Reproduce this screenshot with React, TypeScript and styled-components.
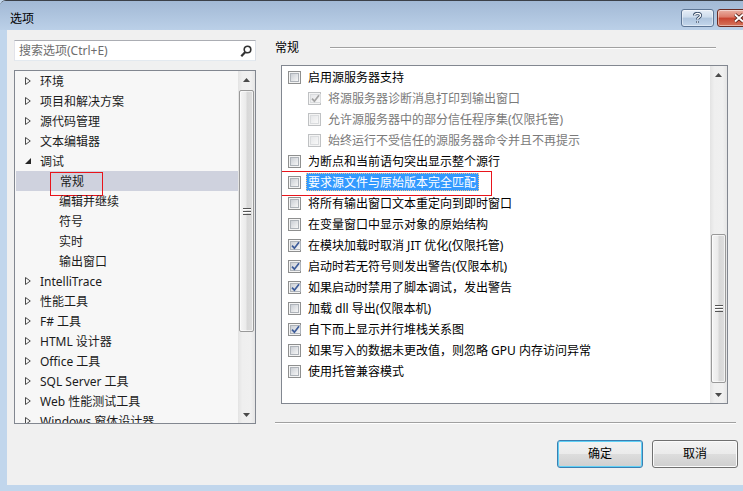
import styled, { createGlobalStyle } from 'styled-components';

const GlobalStyle = createGlobalStyle`
  html, body { margin: 0; padding: 0; background: #c1d6ec; }
  body {
    font-family: "Noto Sans", "Noto Sans CJK SC", sans-serif;
    font-size: 12px;
    color: #000;
  }
  * { box-sizing: border-box; }
`;

const Window = styled.div`
  width: 743px;
  height: 491px;
  overflow: hidden;
  display: flex;
  flex-direction: column;
  background: #c1d6ec;
  border-top: 1px solid #3b4048;
  border-top-left-radius: 6px;
`;

const TitleBar = styled.div`
  height: 29px;
  flex: none;
  display: flex;
  align-items: flex-start;
  padding-left: 10px;
  background: linear-gradient(#a2b9d5, #bbd0e8);
`;

const Title = styled.div`
  flex: 1;
  margin-top: 10px;
  font-size: 12px;
  line-height: 16px;
`;

const CaptionButtons = styled.div`
  display: flex;
  gap: 3px;
  margin-top: 8px;
  margin-right: -17px;
`;

const CaptionButton = styled.div<{ $close?: boolean }>`
  height: 18px;
  width: ${p => (p.$close ? 43 : 33)}px;
  border: 1px solid ${p => (p.$close ? '#6b2b22' : '#5d7594')};
  border-radius: 3px;
  display: flex;
  align-items: center;
  justify-content: center;
  box-shadow: inset 0 0 0 1px rgba(255, 255, 255, 0.45);
  background: ${p =>
    p.$close
      ? 'linear-gradient(#eab0a3 0%, #dc7a68 45%, #c8432f 50%, #d5755c 100%)'
      : 'linear-gradient(#e6eef7 0%, #cddcec 45%, #aec4dd 50%, #c4d7ec 100%)'};
`;

const Client = styled.div`
  flex: 1;
  margin-left: 7px;
  background: #f0f0f0;
  display: flex;
  padding-left: 7px;
`;

const BottomFrame = styled.div`
  height: 6px;
  flex: none;
`;

/* left side */

const LeftCol = styled.div`
  width: 242px;
  flex: none;
  padding-top: 10px;
  display: flex;
  flex-direction: column;
  gap: 9px;
`;

const Search = styled.div`
  height: 21px;
  background: #fff;
  border: 1px solid;
  border-color: #abadb3 #dbdfe6 #e3e9ef #e2e3ea;
  display: flex;
  align-items: center;
  justify-content: space-between;
  padding: 1px 3px 0 4px;
  color: #6d6d6d;
  line-height: 14px;
`;

const Tree = styled.div`
  height: 354px;
  border: 1px solid #828790;
  background: #f7f7f7;
  display: flex;
  overflow: hidden;
`;

const TreeList = styled.div`
  flex: 1;
  overflow: hidden;
`;

const TreeRow = styled.div<{ $child?: boolean; $selected?: boolean }>`
  height: 20px;
  display: flex;
  align-items: center;
  position: relative;
  white-space: nowrap;
  padding-top: 2px;
  padding-left: ${p => (p.$child ? 44 : 10)}px;
  margin-left: ${p => (p.$selected ? 1 : 0)}px;
  background: ${p => (p.$selected ? '#cfd2de' : 'transparent')};
  color: #1b1b1b;
  line-height: 14px;
`;

const Expander = styled.span`
  width: 15px;
  flex: none;
  display: flex;
  align-items: center;
  margin-top: -2px;
`;

/* right side */

const RightCol = styled.div`
  width: 463px;
  flex: none;
  margin-left: 19px;
  padding-top: 9px;
  display: flex;
  flex-direction: column;
`;

const SectionHeader = styled.div`
  height: 18px;
  display: flex;
  align-items: center;
  margin-bottom: 8px;
  line-height: 14px;
`;

const EtchedLine = styled.div`
  height: 2px;
  border-top: 1px solid #a0a0a0;
  border-bottom: 1px solid #fff;
`;

const HeaderLine = styled(EtchedLine)`
  flex: 1;
  margin: 0 22px 0 31px;
`;

const OptionList = styled.div`
  margin-left: 6px;
  width: 447px;
  height: 339px;
  border: 1px solid #828790;
  background: #fff;
  display: flex;
  overflow: hidden;
`;

const Options = styled.div`
  flex: 1;
`;

const OptionRow = styled.div<{ $sub?: boolean }>`
  height: 21px;
  display: flex;
  align-items: center;
  position: relative;
  white-space: nowrap;
  padding-top: 1px;
  padding-left: ${p => (p.$sub ? 26 : 6)}px;
  line-height: 14px;
`;

const OptionLabel = styled.span<{ $disabled?: boolean; $selected?: boolean }>`
  flex: none;
  margin-left: 5px;
  height: 18px;
  display: flex;
  align-items: center;
  padding: 1px 3px 0 2px;
  color: ${p => (p.$selected ? '#fff' : p.$disabled ? '#7a7a7a' : '#000')};
  background: ${p => (p.$selected ? '#3399ff' : 'transparent')};
  outline: 1px dotted ${p => (p.$selected ? '#f3c890' : 'transparent')};
  outline-offset: -1px;
`;

const Box = styled.span<{ $disabled?: boolean }>`
  width: 13px;
  height: 13px;
  flex: none;
  padding: 1px;
  display: flex;
  border: 1px solid ${p => (p.$disabled ? '#bfc1c3' : '#8e8f8f')};
  background: #f4f4f4;
`;

const BoxInner = styled.span<{ $disabled?: boolean }>`
  flex: 1;
  display: flex;
  align-items: center;
  justify-content: center;
  border: 1px solid ${p => (p.$disabled ? '#dadcde' : '#aeb3b9')};
  background: ${p =>
    p.$disabled
      ? 'linear-gradient(135deg, #e6e7e9, #f8f8f8)'
      : 'linear-gradient(135deg, #cbcfd5, #f6f6f6)'};
`;

const Mark = styled.div<{ $left: number; $top: number; $w: number; $h: number }>`
  position: absolute;
  left: ${p => p.$left}px;
  top: ${p => p.$top}px;
  width: ${p => p.$w}px;
  height: ${p => p.$h}px;
  border: 1px solid #e8141b;
  pointer-events: none;
`;

/* scrollbars */

const ScrollBar = styled.div`
  width: 17px;
  flex: none;
  display: flex;
  flex-direction: column;
  align-items: center;
  background: linear-gradient(90deg, #e3e3e3, #efefef 25%, #f0f0f0 75%, #e5e5e5);
`;

const ScrollArrow = styled.div`
  height: 17px;
  width: 100%;
  flex: none;
  display: flex;
  align-items: center;
  justify-content: center;
`;

const Thumb = styled.div<{ $top: number; $height: number }>`
  width: 15px;
  flex: none;
  margin-top: ${p => p.$top}px;
  height: ${p => p.$height}px;
  border: 1px solid #999;
  border-radius: 2px;
  display: flex;
  align-items: center;
  justify-content: center;
  background: linear-gradient(90deg, #f5f5f5, #ebebeb 45%, #d8d8d8 55%, #dedede);
  box-shadow: inset 0 0 0 1px rgba(255, 255, 255, 0.6);
`;

const Spacer = styled.div`
  flex: 1;
`;

/* buttons */

const ButtonRow = styled.div`
  margin-top: 16px;
  display: flex;
  justify-content: flex-end;
  gap: 9px;
`;

const Button = styled.div<{ $default?: boolean }>`
  width: 86px;
  height: 28px;
  display: flex;
  align-items: center;
  justify-content: center;
  border-radius: 3px;
  border: 1px solid ${p => (p.$default ? '#3c7fb1' : '#707070')};
  box-shadow: inset 0 0 0 1px ${p => (p.$default ? '#5fd0f6' : '#fbfbfb')};
  background: linear-gradient(#f2f2f2 0%, #ebebeb 50%, #dddddd 51%, #cfcfcf 100%);
  line-height: 14px;
`;

const Separator = styled(EtchedLine)`
  margin-top: 18px;
  width: 461px;
`;

function Check({ disabled }: { disabled?: boolean }) {
  return (
    <svg width="9" height="9" viewBox="0 0 9 9">
      <path
        d="M1 4.6 L3.4 7.2 L8 1.2"
        fill="none"
        stroke={disabled ? '#a3a3a3' : '#3d5c9a'}
        strokeWidth="1.7"
      />
    </svg>
  );
}

function CheckBox({ checked, disabled }: { checked?: boolean; disabled?: boolean }) {
  return (
    <Box $disabled={disabled}>
      <BoxInner $disabled={disabled}>{checked && <Check disabled={disabled} />}</BoxInner>
    </Box>
  );
}

function Arrow({ down }: { down?: boolean }) {
  return (
    <svg width="7" height="4" viewBox="0 0 7 4">
      <polygon points={down ? '0,0 7,0 3.5,4' : '0,4 7,4 3.5,0'} fill="#4a4a4a" />
    </svg>
  );
}

function Grip() {
  return (
    <svg width="8" height="7" viewBox="0 0 8 7">
      <rect x="0" y="0" width="8" height="1" fill="#555" />
      <rect x="0" y="1" width="8" height="1" fill="#fff" />
      <rect x="0" y="3" width="8" height="1" fill="#555" />
      <rect x="0" y="4" width="8" height="1" fill="#fff" />
      <rect x="0" y="6" width="8" height="1" fill="#555" />
    </svg>
  );
}

function VScroll({ top, height }: { top: number; height: number }) {
  return (
    <ScrollBar>
      <ScrollArrow>
        <Arrow />
      </ScrollArrow>
      <Thumb $top={top} $height={height}>
        <Grip />
      </Thumb>
      <Spacer />
      <ScrollArrow>
        <Arrow down />
      </ScrollArrow>
    </ScrollBar>
  );
}

const treeItems: { label: string; child?: boolean; open?: boolean; selected?: boolean }[] = [
  { label: '环境' },
  { label: '项目和解决方案' },
  { label: '源代码管理' },
  { label: '文本编辑器' },
  { label: '调试', open: true },
  { label: '常规', child: true, selected: true },
  { label: '编辑并继续', child: true },
  { label: '符号', child: true },
  { label: '实时', child: true },
  { label: '输出窗口', child: true },
  { label: 'IntelliTrace' },
  { label: '性能工具' },
  { label: 'F# 工具' },
  { label: 'HTML 设计器' },
  { label: 'Office 工具' },
  { label: 'SQL Server 工具' },
  { label: 'Web 性能测试工具' },
  { label: 'Windows 窗体设计器' },
];

const options: { label: string; checked?: boolean; sub?: boolean; selected?: boolean }[] = [
  { label: '启用源服务器支持' },
  { label: '将源服务器诊断消息打印到输出窗口', sub: true, checked: true },
  { label: '允许源服务器中的部分信任程序集(仅限托管)', sub: true },
  { label: '始终运行不受信任的源服务器命令并且不再提示', sub: true },
  { label: '为断点和当前语句突出显示整个源行' },
  { label: '要求源文件与原始版本完全匹配', selected: true },
  { label: '将所有输出窗口文本重定向到即时窗口' },
  { label: '在变量窗口中显示对象的原始结构' },
  { label: '在模块加载时取消 JIT 优化(仅限托管)', checked: true },
  { label: '启动时若无符号则发出警告(仅限本机)', checked: true },
  { label: '如果启动时禁用了脚本调试，发出警告', checked: true },
  { label: '加载 dll 导出(仅限本机)' },
  { label: '自下而上显示并行堆栈关系图', checked: true },
  { label: '如果写入的数据未更改值，则忽略 GPU 内存访问异常' },
  { label: '使用托管兼容模式' },
];

export default function App() {
  return (
    <>
      <GlobalStyle />
      <Window>
        <TitleBar>
          <Title>选项</Title>
          <CaptionButtons>
            <CaptionButton>
              <svg width="9" height="12" viewBox="0 0 9 12">
                <path
                  d="M1.5 3.5 C1.5 0.8 7.5 0.8 7.5 3.5 C7.5 5.5 4.5 5.5 4.5 7.5 M4.5 9.3 L4.5 10.8"
                  fill="none"
                  stroke="#2e4360"
                  strokeWidth="3"
                />
                <path
                  d="M1.5 3.5 C1.5 0.8 7.5 0.8 7.5 3.5 C7.5 5.5 4.5 5.5 4.5 7.5 M4.5 9.3 L4.5 10.8"
                  fill="none"
                  stroke="#fff"
                  strokeWidth="1.4"
                />
              </svg>
            </CaptionButton>
            <CaptionButton $close>
              <svg width="12" height="10" viewBox="0 0 12 10">
                <path d="M2 1.5 L10 8.5 M10 1.5 L2 8.5" stroke="#4a1a14" strokeWidth="3.6" />
                <path d="M2 1.5 L10 8.5 M10 1.5 L2 8.5" stroke="#fff" strokeWidth="2" />
              </svg>
            </CaptionButton>
          </CaptionButtons>
        </TitleBar>

        <Client>
          <LeftCol>
            <Search>
              <span>搜索选项(Ctrl+E)</span>
              <svg width="12" height="13" viewBox="0 0 12 13">
                <circle cx="7.5" cy="4.5" r="3.3" fill="none" stroke="#333" strokeWidth="1.6" />
                <path d="M5.3 7 L1.3 11.3" stroke="#333" strokeWidth="2.2" />
              </svg>
            </Search>
            <Tree>
              <TreeList>
                {treeItems.map(item => (
                  <TreeRow key={item.label} $child={item.child} $selected={item.selected}>
                    {!item.child && (
                      <Expander>
                        {item.open ? (
                          <svg width="6" height="6" viewBox="0 0 6 6">
                            <polygon points="6,0 6,6 0,6" fill="#262626" />
                          </svg>
                        ) : (
                          <svg width="6" height="8" viewBox="0 0 6 8">
                            <polygon points="0.5,0.5 5.3,4 0.5,7.5" fill="none" stroke="#4a4a4a" />
                          </svg>
                        )}
                      </Expander>
                    )}
                    {item.label}
                    {item.selected && <Mark $left={34} $top={1} $w={53} $h={24} />}
                  </TreeRow>
                ))}
              </TreeList>
              <VScroll top={2} height={242} />
            </Tree>
          </LeftCol>

          <RightCol>
            <SectionHeader>
              常规
              <HeaderLine />
            </SectionHeader>
            <OptionList>
              <Options>
                {options.map(o => (
                  <OptionRow key={o.label} $sub={o.sub}>
                    <CheckBox checked={o.checked} disabled={o.sub} />
                    <OptionLabel $disabled={o.sub} $selected={o.selected}>
                      {o.label}
                    </OptionLabel>
                    {o.selected && <Mark $left={-1} $top={0} $w={211} $h={25} />}
                  </OptionRow>
                ))}
              </Options>
              <VScroll top={151} height={149} />
            </OptionList>
            <Separator />
            <ButtonRow>
              <Button $default>确定</Button>
              <Button>取消</Button>
            </ButtonRow>
          </RightCol>
        </Client>
        <BottomFrame />
      </Window>
    </>
  );
}
